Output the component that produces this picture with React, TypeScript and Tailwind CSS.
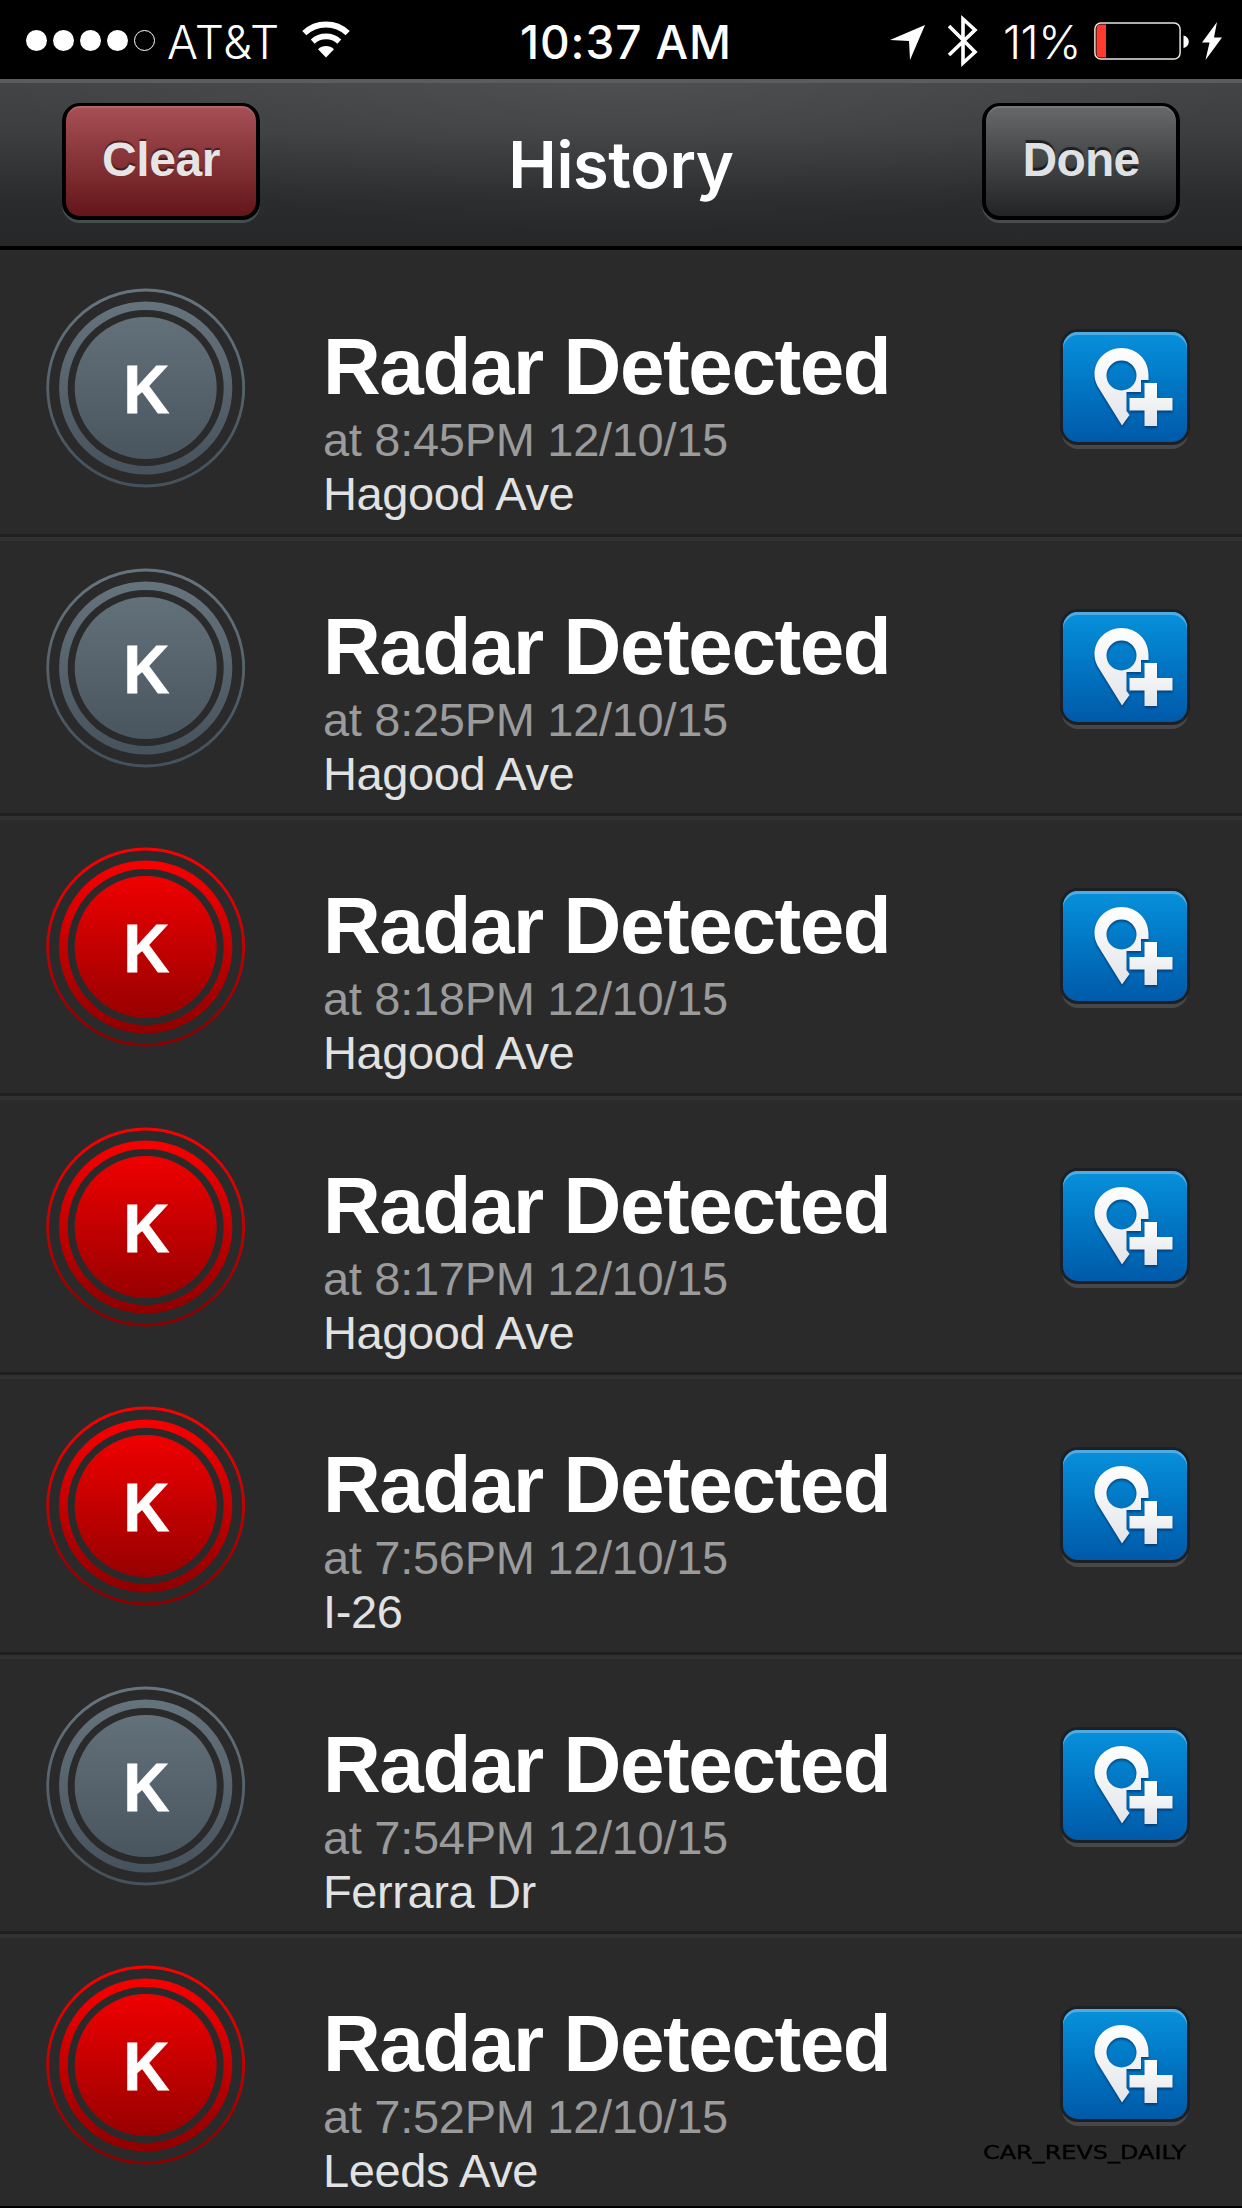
import React from "react";

type Tone = "gray" | "red";

const ROWS: { tone: Tone; title: string; time: string; place: string }[] = [
  { tone: "gray", title: "Radar Detected", time: "at 8:45PM 12/10/15", place: "Hagood Ave" },
  { tone: "gray", title: "Radar Detected", time: "at 8:25PM 12/10/15", place: "Hagood Ave" },
  { tone: "red", title: "Radar Detected", time: "at 8:18PM 12/10/15", place: "Hagood Ave" },
  { tone: "red", title: "Radar Detected", time: "at 8:17PM 12/10/15", place: "Hagood Ave" },
  { tone: "red", title: "Radar Detected", time: "at 7:56PM 12/10/15", place: "I-26" },
  { tone: "gray", title: "Radar Detected", time: "at 7:54PM 12/10/15", place: "Ferrara Dr" },
  { tone: "red", title: "Radar Detected", time: "at 7:52PM 12/10/15", place: "Leeds Ave" },
];

function StatusBar() {
  return (
    <div className="relative flex h-[79px] shrink-0 items-start bg-black font-['Inter',sans-serif] text-[46px] leading-[56px] text-white">
      <div className="ml-[26px] mt-[30px] flex gap-[6px]">
        <i className="size-[21px] rounded-full bg-white" />
        <i className="size-[21px] rounded-full bg-white" />
        <i className="size-[21px] rounded-full bg-white" />
        <i className="size-[21px] rounded-full bg-white" />
        <i className="size-[21px] rounded-full border border-white" />
      </div>
      <span className="ml-[12px] mt-[14px] w-[113px] whitespace-nowrap font-[350] tracking-[0.7px]">AT&amp;T</span>
      <svg className="ml-[22px] mt-[21px] h-[37px] w-[48px]" viewBox="0 0 48 37" fill="none" stroke="#fff">
        <path d="M2.300 12.200a31.500 31.500 0 0 1 43.400 0" strokeWidth="6" />
        <path d="M10.700 20.600a19.500 19.500 0 0 1 26.600 0" strokeWidth="5.600" />
        <path d="M24 36.500 16 28.300a11.500 11.500 0 0 1 16 0z" fill="#fff" stroke="none" />
      </svg>
      <span className="absolute left-[520px] top-[14px] whitespace-nowrap font-medium tracking-[0.9px]">10:37 AM</span>
      <div className="ml-auto flex items-start">
        <svg className="mt-[25px] h-[35px] w-[35px]" viewBox="0 0 35 35" fill="#fff">
          <path d="M35 0 20 35 19 16 0 15z" />
        </svg>
        <svg className="ml-[23px] mt-[14px] h-[54px] w-[30px]" viewBox="0 0 30 54" fill="none" stroke="#fff" strokeWidth="3.600">
          <path d="M1 12 27 38 15 49V5L27 16 1 41" strokeMiterlimit="8" />
        </svg>
        <span className="ml-[25px] mt-[14px] w-[80px] whitespace-nowrap font-[350] tracking-[-0.500px]">11%</span>
        <svg className="ml-[11px] mt-[22px] h-[38px] w-[96px]" viewBox="0 0 96 38">
          <rect x="0.900" y="0.900" width="85.200" height="36.200" rx="6" fill="none" stroke="#e8e6e0" strokeWidth="1.500" />
          <path d="M2.500 6.500a4 4 0 0 1 4-4H12v33H6.500a4 4 0 0 1-4-4z" fill="#ff3b30" />
          <path d="M89.500 13.500c3.200.8 5.300 3 5.300 6.300s-2.100 5.500-5.300 6.300z" fill="#fff" />
        </svg>
        <svg className="ml-[12px] mr-[20px] mt-[22px] h-[38px] w-[20px]" viewBox="0 0 20 38" fill="#fff">
          <path d="M15 0 0 20.500h7.500L3.500 38 20 15.500h-8z" />
        </svg>
      </div>
    </div>
  );
}

function NavBar() {
  return (
    <div className="h-[171px] shrink-0 border-b-[4px] border-t-[4px] border-b-black border-t-[#5b5c5e] bg-[radial-gradient(ellipse_620px_150px_at_50%_0%,rgba(255,255,255,0.06),transparent),linear-gradient(#434446,#3d3e40_30%,#2b2c2e_70%,#262729)]">
      <div className="flex items-start justify-between px-[62px] pt-[20px]">
        <button className="h-[117px] w-[198px] rounded-[18px] border-[4px] border-t-[3px] border-black bg-linear-to-b from-[#a75055] to-[#641519] pb-[3px] font-['Liberation_Sans',Arial,sans-serif] text-[48px] font-bold tracking-[-0.4px] text-[#e6e4e5] shadow-[0_3px_0_#474c4d,inset_0_2px_0_#b26468] [text-shadow:0_-2px_1px_rgba(0,0,0,0.5)]">
          Clear
        </button>
        <h1 className="mt-[22px] font-['Inter',sans-serif] text-[65px] font-semibold leading-[80px] tracking-[-0.4px] text-white">History</h1>
        <button className="h-[117px] w-[198px] rounded-[18px] border-[4px] border-t-[3px] border-black bg-linear-to-b from-[#68696b] to-[#232426] pb-[3px] font-['Liberation_Sans',Arial,sans-serif] text-[48px] font-bold tracking-[-0.8px] text-[#dfe1e4] shadow-[0_3px_0_#4a4b4d,inset_0_2px_0_#77787a] [text-shadow:0_-3px_1px_rgba(0,0,0,0.6)]">
          Done
        </button>
      </div>
    </div>
  );
}

function Badge({ tone, id }: { tone: Tone; id: string }) {
  const [top, bottom] = tone === "red" ? ["#fb0000", "#8c0000"] : ["#66747d", "#46525b"];
  return (
    <svg className="h-[200px] w-[200px] shrink-0" viewBox="0 0 200 200">
      <defs>
        <linearGradient id={id} gradientUnits="userSpaceOnUse" x1="0" y1="10" x2="0" y2="190">
          <stop offset="0" stopColor={top} />
          <stop offset="1" stopColor={bottom} />
        </linearGradient>
      </defs>
      <circle cx="99.700" cy="100" r="98" fill="none" stroke={`url(#${id})`} strokeWidth="2.800" />
      <circle cx="99.700" cy="100" r="82.300" fill="none" stroke={`url(#${id})`} strokeWidth="8.600" />
      <circle cx="99.700" cy="100" r="71" fill={`url(#${id})`} />
      <text
        transform="translate(100.500 125) scale(0.92 1)"
        textAnchor="middle"
        fill="#fff"
        stroke="#fff"
        strokeWidth="0.800"
        fontFamily="Liberation Sans, Arial, sans-serif"
        fontWeight="700"
        fontSize="69"
      >
        K
      </text>
    </svg>
  );
}

function AddPin({ id }: { id: string }) {
  return (
    <button className="mr-[55px] mt-[75px] h-[110px] w-[124px] shrink-0 rounded-[15px] bg-linear-to-b from-[#0891dc] to-[#005aa9] shadow-[0_0_0_3px_#1c2025,0_6px_0_1px_#474747,inset_0_3px_0_#4fabe2]">
      <svg className="h-[110px] w-[124px]" viewBox="0 0 124 110">
        <defs>
          <linearGradient id={id} x1="0" y1="0" x2="0" y2="1">
            <stop offset="0" stopColor="#ffffff" />
            <stop offset="1" stopColor="#e2e4e8" />
          </linearGradient>
        </defs>
        <g fill={`url(#${id})`} className="drop-shadow-[0_2px_1px_rgba(0,30,80,0.55)]">
          <path
            fillRule="evenodd"
            d="M58.500 16C73.500 16 85.500 27.500 85.500 43V48H78V60H63.500V79L66.500 83 59 93.500 34.500 54C32.500 50 31.500 46.500 31.500 42.500 31.500 27.500 43.500 16 58.500 16ZM58.500 28.500a15 15 0 1 0 0 30 15 15 0 0 0 0-30Z"
          />
          <path d="M81.500 51H94V66H109.500V78.500H94V94H81.500V78.500H66.500V66H81.500Z" />
        </g>
      </svg>
    </button>
  );
}

export default function App() {
  return (
    <div className="relative flex h-[2208px] w-[1242px] flex-col overflow-hidden bg-[#2a2a2b]">
      <StatusBar />
      <NavBar />
      <ul className="flex min-h-0 flex-1 flex-col overflow-hidden border-b-2 border-black pt-[7px] font-['Liberation_Sans',Arial,sans-serif]">
        {ROWS.map((row, i) => (
          <li key={row.time} className="flex h-[279.5px] shrink-0 items-start border-b-[3px] border-[#1f1f1f] pl-[46px] shadow-[0_4px_0_#313131]">
            <div className="pt-[31px]">
              <Badge tone={row.tone} id={`badge-${i}`} />
            </div>
            <div className="ml-[77px] flex-1 whitespace-nowrap pt-[65px]">
              <div className="text-[80px] font-bold leading-[90px] tracking-[-1.4px] text-white">{row.title}</div>
              <div className="pt-px text-[47px] leading-[54px] tracking-[-0.3px] text-[#9b9b9b]">{row.time}</div>
              <div className="text-[47px] leading-[54px] tracking-[-0.4px] text-[#e2e2e2]">{row.place}</div>
            </div>
            <AddPin id={`pin-${i}`} />
          </li>
        ))}
      </ul>
      <div className="absolute left-[983px] top-[2140px] origin-left scale-x-[1.26] whitespace-nowrap font-['DejaVu_Sans',sans-serif] text-[19px] leading-[24px] text-black [-webkit-text-stroke:0.4px_black]">
        CAR_REVS_DAILY
      </div>
    </div>
  );
}
